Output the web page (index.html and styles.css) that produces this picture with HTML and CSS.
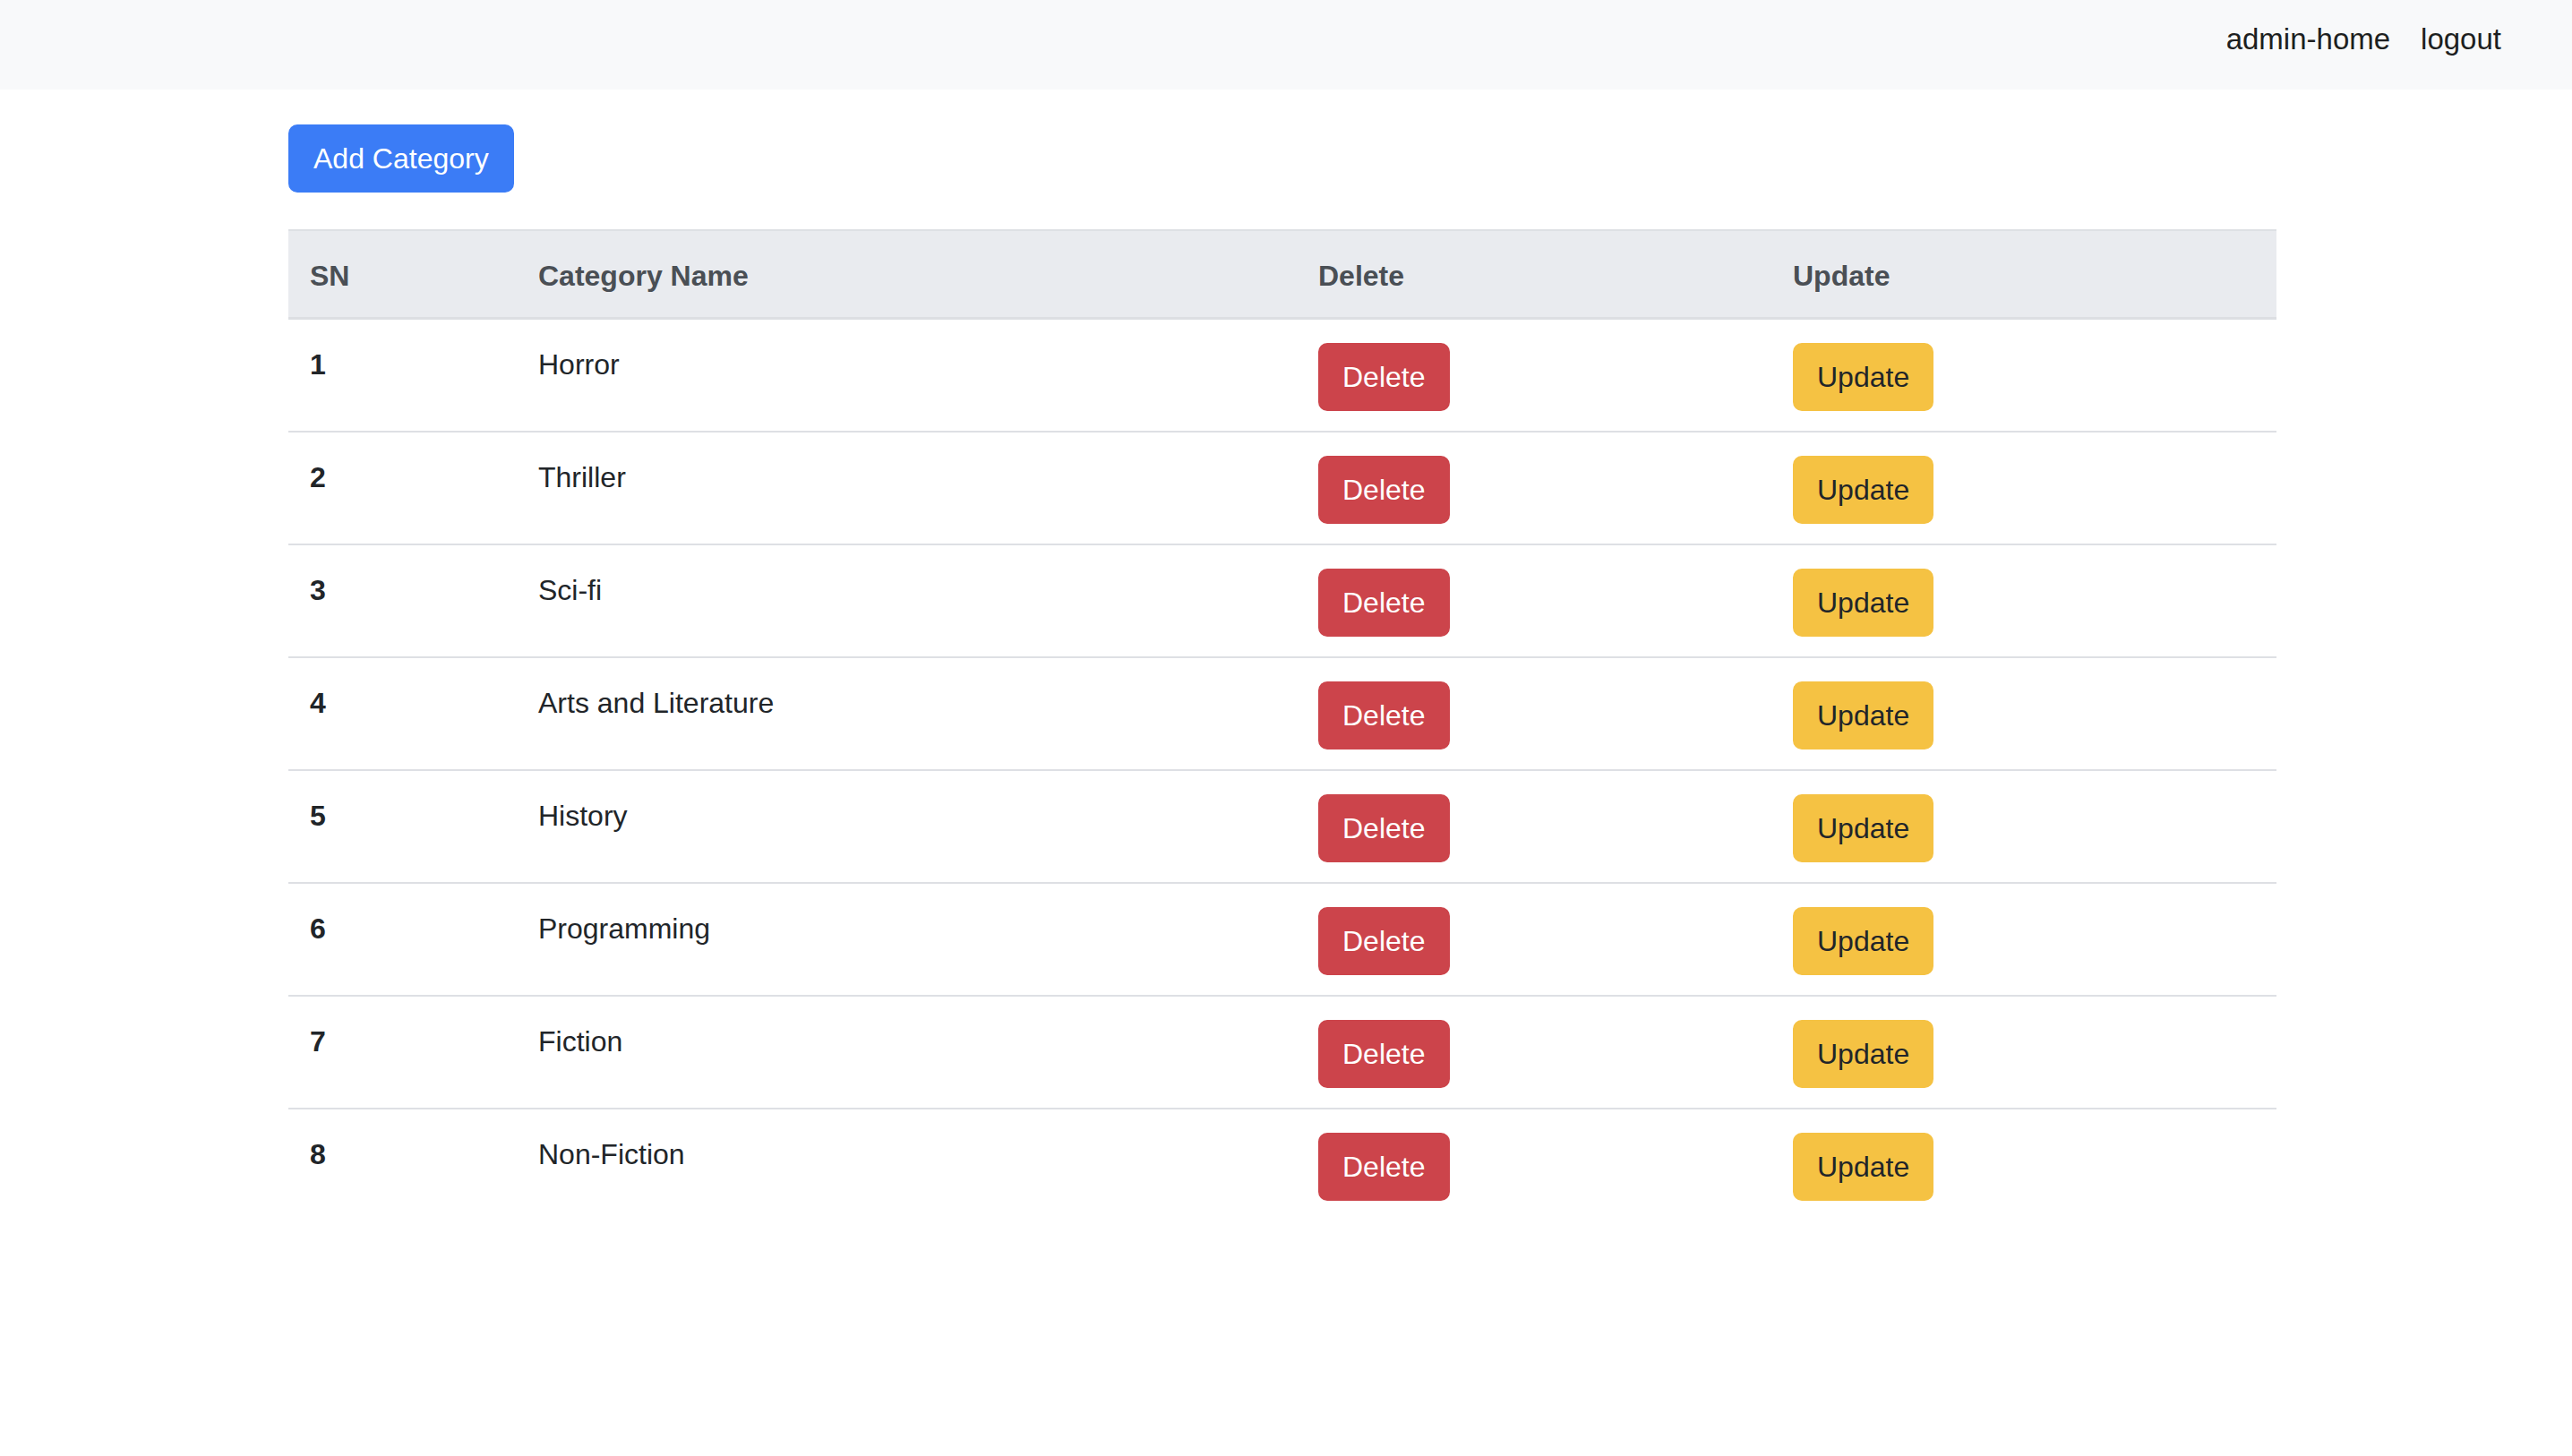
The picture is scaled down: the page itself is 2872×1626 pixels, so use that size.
FILE: index.html
```html
<!DOCTYPE html>
<html lang="en">
<head>
<meta charset="utf-8">
<title>Categories</title>
<link rel="stylesheet" href="styles.css">
</head>
<body>
<nav class="navbar">
  <a class="nav-link" href="#">admin-home</a>
  <a class="nav-link" href="#">logout</a>
</nav>
<main class="container">
  <button class="btn btn-primary">Add Category</button>
  <table class="table">
    <colgroup>
      <col class="c-sn"><col class="c-name"><col class="c-del"><col class="c-upd">
    </colgroup>
    <thead>
      <tr><th>SN</th><th>Category Name</th><th>Delete</th><th>Update</th></tr>
    </thead>
    <tbody>
      <tr><th>1</th><td>Horror</td><td><button class="btn btn-danger">Delete</button></td><td><button class="btn btn-warning">Update</button></td></tr>
      <tr><th>2</th><td>Thriller</td><td><button class="btn btn-danger">Delete</button></td><td><button class="btn btn-warning">Update</button></td></tr>
      <tr><th>3</th><td>Sci-fi</td><td><button class="btn btn-danger">Delete</button></td><td><button class="btn btn-warning">Update</button></td></tr>
      <tr><th>4</th><td>Arts and Literature</td><td><button class="btn btn-danger">Delete</button></td><td><button class="btn btn-warning">Update</button></td></tr>
      <tr><th>5</th><td>History</td><td><button class="btn btn-danger">Delete</button></td><td><button class="btn btn-warning">Update</button></td></tr>
      <tr><th>6</th><td>Programming</td><td><button class="btn btn-danger">Delete</button></td><td><button class="btn btn-warning">Update</button></td></tr>
      <tr><th>7</th><td>Fiction</td><td><button class="btn btn-danger">Delete</button></td><td><button class="btn btn-warning">Update</button></td></tr>
      <tr class="last"><th>8</th><td>Non-Fiction</td><td><button class="btn btn-danger">Delete</button></td><td><button class="btn btn-warning">Update</button></td></tr>
    </tbody>
  </table>
</main>
</body>
</html>
```

FILE: styles.css
```css
html, body {
  margin: 0;
  padding: 0;
  background: #ffffff;
}
body {
  font-family: "Liberation Sans", Arial, sans-serif;
  font-size: 32px;
  line-height: 48px;
  color: #212529;
}
.navbar {
  height: 100px;
  box-sizing: border-box;
  background: #f8f9fa;
  display: flex;
  justify-content: flex-end;
  align-items: flex-start;
  padding: 20px 62px 0 0;
}
.nav-link {
  color: #1d1f21;
  text-decoration: none;
  font-size: 33px;
  padding: 0 17px;
}
.container {
  width: 2220px;
  margin-left: 322px;
  padding-top: 39px;
}
.btn {
  font-family: "Liberation Sans", Arial, sans-serif;
  font-size: 32px;
  line-height: 48px;
  padding: 12px 25px;
  border: 2px solid transparent;
  border-radius: 10px;
  cursor: pointer;
  display: inline-block;
  vertical-align: top;
}
.btn-primary {
  background: #3b7cf6;
  border-color: #3b7cf6;
  color: #ffffff;
  padding: 12px 26px;
}
.btn-danger {
  background: #cc444b;
  border-color: #cc444b;
  color: #ffffff;
}
.btn-warning {
  background: #f5c243;
  border-color: #f5c243;
  color: #212529;
}
.table {
  width: 2220px;
  margin-top: 41px;
  border-collapse: collapse;
  table-layout: fixed;
}
.c-sn { width: 255px; }
.c-name { width: 871px; }
.c-del { width: 530px; }
.c-upd { width: 564px; }
.table th, .table td {
  text-align: left;
  vertical-align: top;
  padding: 26px 24px 22px 24px;
}
.table th {
  font-weight: bold;
}
.table thead th {
  background: #e9ebef;
  color: #4a4f55;
  border-top: 2px solid #dee0e4;
  border-bottom: 3px solid #dcdee2;
  padding: 26px 24px 22px 24px;
}
.table tbody tr {
  border-bottom: 2px solid #dee0e4;
}
.table tbody tr.last {
  border-bottom: none;
}
```
